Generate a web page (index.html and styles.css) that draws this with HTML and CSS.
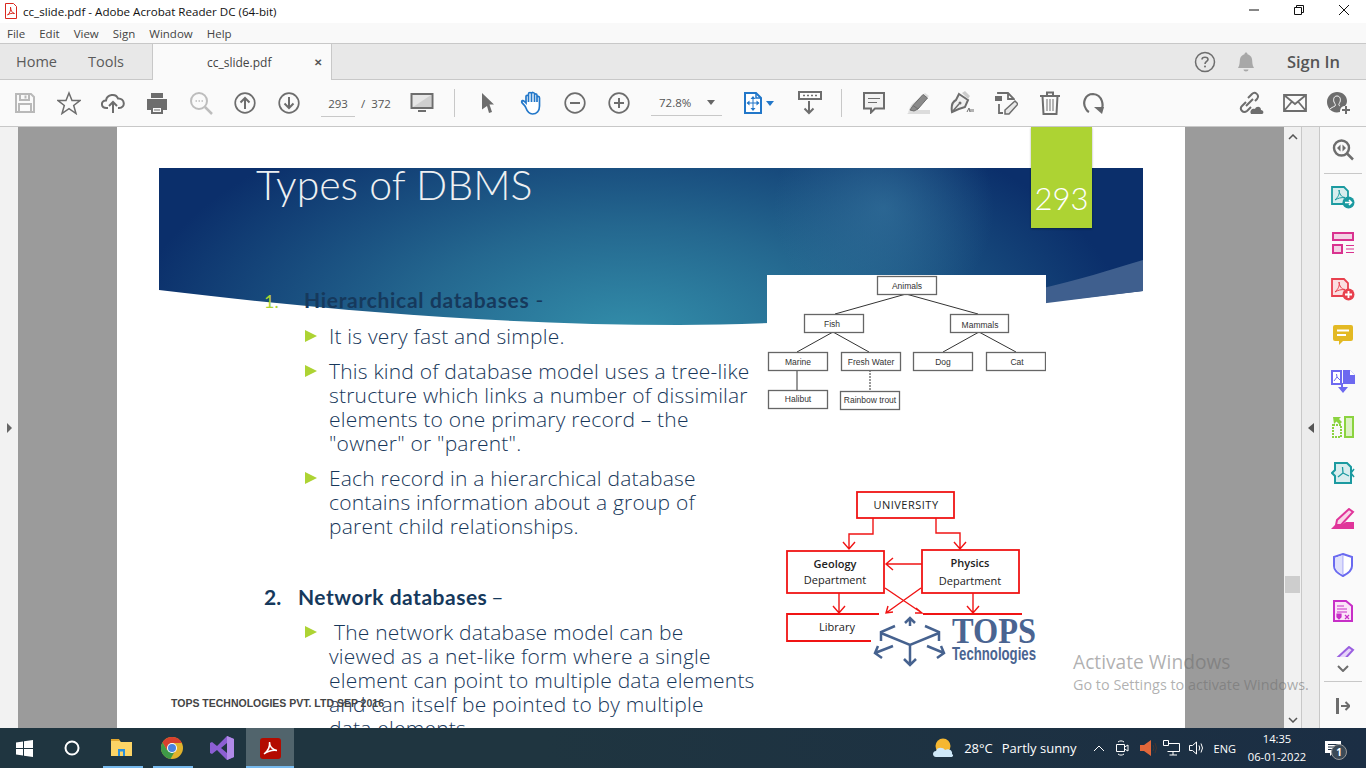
FILE: index.html
```html
<!DOCTYPE html>
<html lang="en">
<head>
    <meta charset="UTF-8">
    <title>cc_slide.pdf - Adobe Acrobat Reader DC (64-bit)</title>
    <link rel="stylesheet" href="styles.css">
</head>
<body>
    <header class="titlebar">
        <svg class="app-icon" width="14" height="16" viewBox="0 0 14 16"><path d="M1.5 .5H9.5L12.5 3.5V15.5H1.5Z" fill="#fff" stroke="#d9281e"/><path d="M3.5 12C6 10 7 7 6.5 4C6.500 7 8 10 10.500 10.500C8 10 5.500 10.500 3.500 12Z" fill="none" stroke="#d9281e"/></svg>
        <span class="window-title">cc_slide.pdf - Adobe Acrobat Reader DC (64-bit)</span>
        <div class="window-controls">
            <svg width="12" height="12" viewBox="0 0 12 12"><path d="M1 6H11" stroke="#111"/></svg>
            <svg width="12" height="12" viewBox="0 0 12 12"><path d="M1.500 3.500H8.500V10.500H1.500ZM3.500 3.500V1.500H10.500V8.500H8.500" fill="none" stroke="#111"/></svg>
            <svg width="12" height="12" viewBox="0 0 12 12"><path d="M1 1L11 11M11 1L1 11" stroke="#111"/></svg>
        </div>
    </header>

    <nav class="menubar">
        <span>File</span><span>Edit</span><span>View</span><span>Sign</span><span>Window</span><span>Help</span>
    </nav>

    <div class="tabbar">
        <a class="tab-link tab-home">Home</a>
        <a class="tab-link tab-tools">Tools</a>
        <div class="tab-active">
            <span class="tab-name">cc_slide.pdf</span>
            <span class="tab-close">&#x2715;</span>
        </div>
        <div class="tab-right">
            <svg width="22" height="22" viewBox="0 0 22 22"><circle cx="11" cy="11" r="9.500" fill="none" stroke="#6d6d6d" stroke-width="1.500"/><path d="M8 8.500C8 5.500 14 5.500 14 8.500C14 10.500 11 10.500 11 13" fill="none" stroke="#6d6d6d" stroke-width="1.600"/><circle cx="11" cy="15.500" r="1" fill="#6d6d6d"/></svg>
            <svg class="bell" width="20" height="22" viewBox="0 0 20 22"><path d="M2 17C4 14 3.500 11 4 8C4.500 5 7 3.500 8.500 3.200C8.500 .8 11.500 .8 11.500 3.200C13 3.500 15.500 5 16 8C16.500 11 16 14 18 17ZM7.500 18.500H12.500C12.500 21 7.500 21 7.500 18.500Z" fill="#a8a8a8"/></svg>
            <span class="sign-in">Sign In</span>
        </div>
    </div>

    <div class="toolbar">
        <button class="tool"><svg width="22" height="22" viewBox="0 0 22 22"><path d="M2 2H17L20 5V20H2ZM6 2.500V8H15V2.500M5 20V12H17V20M11.500 3.500V6.500" fill="none" stroke="#b9b9b9" stroke-width="2"/></svg></button>
        <button class="tool"><svg width="24" height="24" viewBox="0 0 24 24"><path d="M12 2L15 9.500H23L16.700 14.500L19 22.500L12 17.700L5 22.500L7.300 14.500L1 9.500H9Z" fill="none" stroke="#6d6d6d" stroke-width="1.500"/></svg></button>
        <button class="tool"><svg width="24" height="24" viewBox="0 0 24 24"><path d="M7 17H5.500C-.5 17 -.5 9.500 5 9.500C6 3 15 2 17 7.500C24 7 25 17 18 17H17M12 22V11M8 15L12 11L16 15" fill="none" stroke="#6d6d6d" stroke-width="2"/></svg></button>
        <button class="tool"><svg width="24" height="24" viewBox="0 0 24 24"><path d="M6 2H18V7H6ZM2 8H22V19H18V15H6V19H2Z" fill="#6d6d6d"/><path d="M7 16H17V22H7Z" fill="none" stroke="#6d6d6d" stroke-width="2"/><path d="M9 19H15" stroke="#6d6d6d"/></svg></button>
        <button class="tool"><svg width="24" height="24" viewBox="0 0 24 24"><circle cx="10" cy="10" r="8" fill="none" stroke="#bdbdbd" stroke-width="2"/><path d="M16 16L23 23" stroke="#bdbdbd" stroke-width="2.500"/><path d="M6.500 10H8M9.500 10H11M12.500 10H14" stroke="#bdbdbd" stroke-width="1.500"/></svg></button>
        <button class="tool"><svg width="22" height="22" viewBox="0 0 22 22"><circle cx="11" cy="11" r="9.800" fill="none" stroke="#6d6d6d" stroke-width="1.700"/><path d="M11 17V6M6.500 10.500L11 6L15.500 10.500" fill="none" stroke="#6d6d6d" stroke-width="2"/></svg></button>
        <button class="tool"><svg width="22" height="22" viewBox="0 0 22 22"><circle cx="11" cy="11" r="9.800" fill="none" stroke="#6d6d6d" stroke-width="1.700"/><path d="M11 5V16M6.500 11.500L11 16L15.500 11.500" fill="none" stroke="#6d6d6d" stroke-width="2"/></svg></button>
        <div class="page-box">
            <span class="page-input">293</span>
            <span class="page-slash">/</span>
            <span class="page-total">372</span>
        </div>
        <button class="tool tool-monitor"><svg width="24" height="22" viewBox="0 0 24 22"><path d="M1.500 2H22.500V16H1.500Z" fill="#e6e6e6" stroke="#6d6d6d" stroke-width="2"/><path d="M3 15L21 3V15Z" fill="#cfcfcf"/><path d="M8 19H16" stroke="#6d6d6d" stroke-width="2"/></svg></button>
        <i class="tool-sep sep-one"></i>
        <button class="tool"><svg width="14" height="22" viewBox="0 0 14 22"><path d="M1 1L13 12.500H8.500L11 20L8 21L6 14L1 17.500Z" fill="#6d6d6d"/></svg></button>
        <button class="tool"><svg width="24" height="24" viewBox="0 0 24 24"><path d="M5.500 16C4.500 14 2 12.500 1.700 11C1.500 9.500 3 9 4.500 10.500L6 12V5.500C6 3.800 8 3.800 8.500 5.500V3C8.500 1 11.500 1 11.500 3V2.800C11.500 1 14.500 1 14.500 3V4C14.500 2.500 17 2.500 17 4.500V6.500C17 5 19.500 5 19.500 7V15C19.500 20 16.500 23 12.500 23C9 23 7 20 5.500 16ZM8.500 5.500V11M11.500 3V11M14.500 3V11M17 5V11" fill="#fff" stroke="#2277c9" stroke-width="1.700"/></svg></button>
        <button class="tool tool-minus"><svg width="22" height="22" viewBox="0 0 22 22"><circle cx="11" cy="11" r="9.800" fill="none" stroke="#6d6d6d" stroke-width="1.700"/><path d="M6 11H16" stroke="#6d6d6d" stroke-width="2"/></svg></button>
        <button class="tool"><svg width="22" height="22" viewBox="0 0 22 22"><circle cx="11" cy="11" r="9.800" fill="none" stroke="#6d6d6d" stroke-width="1.700"/><path d="M6 11H16M11 6V16" stroke="#6d6d6d" stroke-width="2"/></svg></button>
        <div class="zoom-box">
            <span class="zoom-value">72.8%</span>
            <i class="caret"></i>
        </div>
        <button class="tool tool-fit"><svg width="18" height="22" viewBox="0 0 18 22"><path d="M1 1H12L17 6V21H1Z" fill="#fff" stroke="#2277c9" stroke-width="2"/><path d="M12 1V6H17" fill="none" stroke="#2277c9" stroke-width="1.500"/><path d="M9 5V18M3.500 11H14.500" stroke="#2277c9"/><path d="M9 4L11.500 7H6.500ZM9 19L11.500 16H6.500ZM2.500 11L5.500 8.500V13.500ZM15.500 11L12.500 8.500V13.500Z" fill="#2277c9"/></svg><i class="caret caret-blue"></i></button>
        <button class="tool tool-keys"><svg width="24" height="24" viewBox="0 0 24 24"><path d="M1 1H23V8H1Z" fill="none" stroke="#6d6d6d" stroke-width="2"/><path d="M5 4.500H7M9 4.500H11M13 4.500H15M17 4.500H19" stroke="#6d6d6d" stroke-width="1.500"/><path d="M11 10V22M6.500 17.500L11 22L15.500 17.500" fill="none" stroke="#6d6d6d" stroke-width="2"/></svg></button>
        <i class="tool-sep sep-two"></i>
        <button class="tool tool-comment"><svg width="22" height="22" viewBox="0 0 22 22"><path d="M1 1H21V16.500H12L8 20.500V16.500H1Z" fill="#f2f2f2" stroke="#6d6d6d" stroke-width="2"/><path d="M5 6.500H17M5 10.500H14" stroke="#6d6d6d"/></svg></button>
        <button class="tool"><svg width="24" height="24" viewBox="0 0 24 24"><path d="M1 23H24V19H6Z" fill="#dcdcdc"/><path d="M19 2L23 5L11 18L6 19L2 22L4 16L6 13Z" fill="#ddd"/><path d="M17 3.500L21.500 7L12 18L7 14.500Z M7 14.500L4 19L8 20L12 18" fill="#8a8a8a" stroke="#6d6d6d"/></svg></button>
        <button class="tool"><svg width="24" height="24" viewBox="0 0 24 24"><path d="M9 3L18 9L15 16C11 17 6 19 2 21C1 15 2 11 6 9Z" fill="#f0f0f0" stroke="#6d6d6d" stroke-width="2"/><path d="M2 21L9 13" stroke="#6d6d6d" stroke-width="1.500"/><circle cx="10" cy="12" r="1.500" fill="#6d6d6d"/><path d="M12 2L15 0L20 5L18 8Z" fill="#ccc"/><path d="M17 21L19 17L20 21M21 21V18M23 21V18" stroke="#6d6d6d" fill="none"/></svg></button>
        <button class="tool"><svg width="24" height="24" viewBox="0 0 24 24"><path d="M1 5H8V10H1Z" fill="#6d6d6d"/><path d="M4 3V2H14L20 8V9M14 2V8H20M5 13V22H9" fill="none" stroke="#6d6d6d" stroke-width="1.800"/><path d="M21 10L24 13L15 23H11V19Z" fill="#e8e8e8" stroke="#6d6d6d" stroke-width="1.500"/></svg></button>
        <button class="tool"><svg width="20" height="24" viewBox="0 0 20 24"><path d="M0 5H20M7 5V1.500H13V5M2.500 5L3.500 23H16.500L17.500 5" fill="none" stroke="#6d6d6d" stroke-width="2"/><path d="M7 8V20M10 8V20M13 8V20" stroke="#6d6d6d"/></svg></button>
        <button class="tool"><svg width="24" height="24" viewBox="0 0 24 24"><path d="M19 20C22 15 21 4 11 3C3 3 0 12 4 18C5 20 6 20.500 7 21" fill="none" stroke="#6d6d6d" stroke-width="2.200"/><path d="M12 16H22L20 23Z" fill="#6d6d6d"/></svg></button>
        <div class="tool-right">
            <button class="tool"><svg width="26" height="24" viewBox="0 0 26 24"><path d="M10 7L14 3C17 0 22 4 19 8L17 10M13 16L9 20C5 23 1 18 4 15L8 11M8 15L15 8" fill="none" stroke="#6d6d6d" stroke-width="2"/><path d="M13 23C11 19 15 17 17 18C18 15 23 15 23 19C26 19 26 23 24 23Z" fill="#6d6d6d"/></svg></button>
            <button class="tool"><svg width="24" height="20" viewBox="0 0 24 20"><path d="M1 2H23V18H1ZM1 2L12 11L23 2M1 18L9 8.500M23 18L15 8.500" fill="none" stroke="#6d6d6d" stroke-width="1.800"/></svg></button>
            <button class="tool"><svg width="24" height="24" viewBox="0 0 24 24"><path d="M10 1C16 1 20 5 20 10C20 12 19 14 18 15C15 15 13 17 13 21C5 23 0 17 0 11C0 5 5 1 10 1Z" fill="#6d6d6d"/><path d="M10 5C7 5 6 8 7 11C8 13 9 14 8 15C6 16 4 17 3 18M10 5C13 5 14 8 13 11C12 13 11 14 13 15" fill="none" stroke="#fafafa"/><path d="M19 15V23M15 19H23" stroke="#6d6d6d" stroke-width="2"/></svg></button>
        </div>
    </div>

    <div class="workspace">
        <aside class="nav-panel"><i class="arrow-right"></i></aside>

        <main class="viewer">
            <article class="page">
                <svg class="banner" width="984" height="160" viewBox="0 0 984 160">
                    <defs>
                        <radialGradient id="glow" gradientUnits="userSpaceOnUse" cx="470" cy="170" r="500" gradientTransform="translate(0 85) scale(1 .5)">
                            <stop offset="0" stop-color="#338fab"/>
                            <stop offset=".45" stop-color="#24678f"/>
                            <stop offset="1" stop-color="#0b2f6b"/>
                        </radialGradient>
                        <radialGradient id="spot" gradientUnits="userSpaceOnUse" cx="725" cy="40" r="110">
                            <stop offset="0" stop-color="#3b7ca4" stop-opacity=".55"/>
                            <stop offset="1" stop-color="#3b7ca4" stop-opacity="0"/>
                        </radialGradient>
                    </defs>
                    <path d="M0 0H984V123C800 145 640 157 520 157C330 157 150 140 0 122Z" fill="url(#glow)"/>
                    <path d="M0 0H984V123C800 145 640 157 520 157C330 157 150 140 0 122Z" fill="url(#spot)"/>
                    <path d="M880 121C920 112 950 102 984 92V123L880 136Z" fill="#3f5f8e"/>
                </svg>

                <h1 class="slide-title">Types of DBMS</h1>
                <div class="slide-tag">293</div>

                <div class="slide-body">
                    <h2 class="db-head db-first"><span class="db-num">1.</span><b>Hierarchical databases</b><span class="dash">-</span></h2>
                    <ul class="bullets bullets-first">
                        <li>It is very fast and simple.</li>
                        <li>This kind of database model uses a tree-like<br>structure which links a number of dissimilar<br>elements to one primary record &ndash; the<br>"owner" or "parent".</li>
                        <li>Each record in a hierarchical database<br>contains information about a group of<br>parent child relationships.</li>
                    </ul>
                    <h2 class="db-head db-second"><span class="db-num">2.</span><b>Network databases</b><span class="dash">&ndash;</span></h2>
                    <ul class="bullets bullets-second">
                        <li><span class="lead">The network database model can be</span><br>viewed as a net-like form where a single<br>element can point to multiple data elements<br>and can itself be pointed to by multiple<br>data elements.</li>
                    </ul>
                </div>

                <svg class="tree" width="279" height="140" viewBox="0 0 279 140">
                    <rect width="279" height="140" fill="#fff"/>
                    <g class="tree-lines">
                        <path d="M139 19L68 39M139 19L211 39M66 57L30 77M66 57L102 77M212 57L176 77M212 57L249 77M30 95V115"/>
                        <path d="M103 95V115" stroke-dasharray="2 1"/>
                    </g>
                    <g class="tree-boxes">
                        <rect x="110.500" y="1.500" width="59" height="18"/>
                        <rect x="37.500" y="39.500" width="59" height="18"/>
                        <rect x="183.500" y="39.500" width="58" height="18"/>
                        <rect x="1.500" y="77.500" width="59" height="18"/>
                        <rect x="74.500" y="77.500" width="59" height="18"/>
                        <rect x="146.500" y="77.500" width="59" height="18"/>
                        <rect x="219.500" y="77.500" width="59" height="18"/>
                        <rect x="1.500" y="115.500" width="59" height="18"/>
                        <rect x="73.500" y="116.500" width="59" height="18"/>
                    </g>
                    <g class="tree-text">
                        <text x="140" y="14">Animals</text>
                        <text x="65" y="52">Fish</text>
                        <text x="213" y="53">Mammals</text>
                        <text x="31" y="90">Marine</text>
                        <text x="104" y="90">Fresh Water</text>
                        <text x="176" y="90">Dog</text>
                        <text x="250" y="90">Cat</text>
                        <text x="31" y="127">Halibut</text>
                        <text x="103" y="128">Rainbow trout</text>
                    </g>
                </svg>

                <svg class="network" width="271" height="192" viewBox="0 0 271 192">
                    <g class="net-box">
                        <rect x="88" y="13" width="97" height="26"/>
                        <rect x="18" y="72" width="97" height="42"/>
                        <rect x="153" y="71" width="97" height="43"/>
                        <path d="M110 135H18V162H110M154 135H253"/>
                    </g>
                    <g class="net-line">
                        <path d="M104 39V55H80V69M74 63L80 70L86 63"/>
                        <path d="M167 39V54H191V69M185 63L191 70L197 63"/>
                        <path d="M153 85H118M124 79L117 85L124 91" stroke-width="2"/>
                        <path d="M70 114V133M64 127L70 134L76 127" stroke-width="2"/>
                        <path d="M204 114V133M198 127L204 134L210 127"/>
                        <path d="M116 109L153 134M147 129L153 134L146 134"/>
                        <path d="M152 109L117 134M119 127L117 134L124 133"/>
                    </g>
                    <text class="net-text net-strong" x="66" y="89">Geology</text>
                    <text class="net-text" x="66" y="105">Department</text>
                    <text class="net-text net-strong" x="201" y="88">Physics</text>
                    <text class="net-text" x="201" y="106">Department</text>
                    <text class="net-text net-wide" x="137" y="30">UNIVERSITY</text>
                    <text class="net-text" x="68" y="152">Library</text>
                    <rect x="102" y="136" width="169" height="56" fill="#fff"/>
                    <g class="logo-mark">
                        <path d="M141 147V140M136 144L141 139L146 144"/>
                        <path d="M124 167L106 174M109 167L106 174L113 179"/>
                        <path d="M158 167L175 174M172 167L175 174L168 179"/>
                        <path d="M126 147L112 153V162M156 147L170 153V162" stroke-width="3.500"/>
                        <path d="M112 154L141 166L170 154M141 166V186M135 180L141 186L147 180" stroke-width="3.500"/>
                    </g>
                    <text class="logo-name" x="183" y="164" textLength="84" lengthAdjust="spacingAndGlyphs">TOPS</text>
                    <text class="logo-sub" x="183" y="181" textLength="84" lengthAdjust="spacingAndGlyphs">Technologies</text>
                </svg>

                <p class="slide-foot">TOPS TECHNOLOGIES PVT. LTD SEP 2016</p>
            </article>
        </main>

        <div class="scrollbar">
            <svg width="10" height="6" viewBox="0 0 10 6"><path d="M1 5L5 1L9 5" fill="none" stroke="#555" stroke-width="1.500"/></svg>
            <i class="scroll-thumb"></i>
            <svg width="10" height="6" viewBox="0 0 10 6"><path d="M1 1L5 5L9 1" fill="none" stroke="#555" stroke-width="1.500"/></svg>
        </div>

        <div class="side-handle"><i class="arrow-left"></i></div>

        <aside class="tool-rail">
            <div class="rail-search">
                <svg width="22" height="22" viewBox="0 0 22 22"><circle cx="9.500" cy="9" r="7.500" fill="none" stroke="#6d6d6d" stroke-width="2.400"/><path d="M15 14.500L21 20.500" stroke="#6d6d6d" stroke-width="2.500"/><path d="M8.500 5.500L5 9L8.500 12.500ZM10.500 5.500L14 9L10.500 12.500Z" fill="#6d6d6d"/></svg>
            </div>
            <div class="rail-list">
                <div class="rail-item"><svg width="24" height="24" viewBox="0 0 24 24"><path d="M1 2H13L17 6V19H1Z" fill="#d8edee" stroke="#1b9aa0" stroke-width="1.800"/><path d="M4 15C7 12 9 9 8 5C8.500 9 10 12 14 12.500C10 12.500 7 13 4 15Z" fill="none" stroke="#1b9aa0"/><circle cx="17.500" cy="17.500" r="6" fill="#1b9aa0"/><path d="M14 17.500H20M18 15L20.500 17.500L18 20" fill="none" stroke="#fff" stroke-width="1.500"/></svg></div>
                <div class="rail-item"><svg width="24" height="24" viewBox="0 0 24 24"><path d="M2 2H22V9H2Z" fill="#f3d3e5" stroke="#d9328f" stroke-width="2"/><path d="M2 14H11V22H2Z" fill="#f3d3e5" stroke="#d9328f" stroke-width="2"/><path d="M15 14.500H23M15 18H23M15 21.500H23" stroke="#d9328f"/></svg></div>
                <div class="rail-item"><svg width="24" height="24" viewBox="0 0 24 24"><path d="M1 2H13L17 6V19H1Z" fill="#fbdfe1" stroke="#e8404e" stroke-width="1.800"/><path d="M4 15C7 12 9 9 8 5C8.500 9 10 12 14 12.500C10 12.500 7 13 4 15Z" fill="none" stroke="#e8404e"/><circle cx="17.500" cy="17.500" r="6" fill="#e8404e"/><path d="M14 17.500H21M17.500 14V21" stroke="#fff" stroke-width="1.800"/></svg></div>
                <div class="rail-item"><svg width="20" height="22" viewBox="0 0 20 22"><path d="M2 1H18Q20 1 20 3V15Q20 17 18 17H10L6 21V17H2Q0 17 0 15V3Q0 1 2 1Z" fill="#e3b924"/><path d="M4 6.500H16M4 11H13" stroke="#fff" stroke-width="2"/></svg></div>
                <div class="rail-item"><svg width="24" height="24" viewBox="0 0 24 24"><path d="M1 2H10V15H1Z" fill="#fff" stroke="#6d69f0" stroke-width="2"/><path d="M12 1H19L24 6V15H12Z" fill="#6d69f0"/><path d="M19 1V6H24" fill="#fff"/><path d="M3 12L6 8L5.500 5M6 8L9 11" stroke="#6d69f0" fill="none"/><path d="M12 14V18H17L12 24L7 18H10V14Z" fill="#6d69f0"/></svg></div>
                <div class="rail-item"><svg width="22" height="22" viewBox="0 0 22 22"><path d="M13 1H21V21H13Z" fill="#dcf2c4" stroke="#8bd33f" stroke-width="2"/><path d="M1 9H9V21H1Z" fill="none" stroke="#8bd33f" stroke-width="2" stroke-dasharray="2 1"/><path d="M1 1H9L7 3L10 6L7.500 8.500L4.500 5.500L2 8Z" fill="#8bd33f"/></svg></div>
                <div class="rail-item"><svg width="24" height="22" viewBox="0 0 24 22"><path d="M4 1H16L20 5V21H4V14L1 11L4 8Z" fill="#d8edee" stroke="#1b9aa0" stroke-width="2"/><path d="M7 15L12 11L11.500 5M12 11L18 14" stroke="#1b9aa0" stroke-width="1.300" fill="none"/><path d="M23 7L20 11L23 15" stroke="#1b9aa0" stroke-width="1.500" fill="none"/></svg></div>
                <div class="rail-item"><svg width="24" height="22" viewBox="0 0 24 22"><path d="M18 1L22 4L10 17H5L6 12Z" fill="#f9d5e8" stroke="#e0359a" stroke-width="2"/><path d="M0 21L4 17H10L15 14H23V21Z" fill="#e0359a"/></svg></div>
                <div class="rail-item"><svg width="20" height="24" viewBox="0 0 20 24"><path d="M10 1L19 4V13C19 18 14 21 10 23C6 21 1 18 1 13V4Z" fill="#fff" stroke="#6a6af0" stroke-width="2"/><path d="M10 2L2 5V13C2 17 6 20 10 22Z" fill="#dfe0fb"/><path d="M10 2V22" stroke="#6a6af0" stroke-width=".5"/></svg></div>
                <div class="rail-item"><svg width="20" height="22" viewBox="0 0 20 22"><path d="M1 1H13L19 6V21H1Z" fill="#fbe3f8" stroke="#c72fc7" stroke-width="2"/><path d="M4 6H11M4 9H14M4 12H14" stroke="#c72fc7"/><path d="M4 14H8V17L6 19L4 17ZM12 15L16 19M16 15L12 19" stroke="#c72fc7" fill="#c72fc7" stroke-width="1.200"/></svg></div>
                <div class="rail-item"><svg width="24" height="22" viewBox="0 0 24 22"><path d="M18 1L22 4L10 17H5L6 12Z" fill="#e6d4f9" stroke="#9a5fe0" stroke-width="2"/><path d="M0 21L4 17H10L15 14H23V21Z" fill="#9a5fe0"/></svg></div>
            </div>
            <div class="rail-foot">
                <svg class="rail-more" width="12" height="7" viewBox="0 0 12 7"><path d="M1 1L6 6L11 1" fill="none" stroke="#6d6d6d" stroke-width="2"/></svg>
                <i class="rail-line"></i>
                <svg class="rail-collapse" width="14" height="16" viewBox="0 0 14 16"><path d="M1.500 0V16" stroke="#6d6d6d" stroke-width="3"/><path d="M5 8H13M9.500 4L13.500 8L9.500 12" fill="none" stroke="#6d6d6d" stroke-width="2"/></svg>
            </div>
        </aside>

        <div class="activate">
            <p class="activate-title">Activate Windows</p>
            <p class="activate-sub">Go to Settings to activate Windows.</p>
        </div>
    </div>

    <footer class="taskbar">
        <div class="task task-start"><svg width="17" height="17" viewBox="0 0 17 17"><path d="M0 2.500L7 1.500V8H0ZM8 1.300L17 0V8H8ZM0 9H7V15.500L0 14.500ZM8 9H17V17L8 15.700Z" fill="#fff"/></svg></div>
        <div class="task task-search"><svg width="16" height="16" viewBox="0 0 16 16"><circle cx="8" cy="8" r="6.500" fill="none" stroke="#fff" stroke-width="2"/></svg></div>
        <div class="task task-open"><svg width="22" height="18" viewBox="0 0 22 18"><path d="M0 1H8L10 3H21V17H0Z" fill="#fcd466"/><path d="M0 0H8L9 2H0Z" fill="#e2a72e"/><path d="M7 10H14V17H12V12.500H9V17H7Z" fill="#2a8fdc"/></svg></div>
        <div class="task task-open"><svg width="22" height="22" viewBox="0 0 22 22"><circle cx="11" cy="11" r="11" fill="#e0b22c"/><path d="M11 0A11 11 0 0 0 1.500 5.500L6 13L11 6H21A11 11 0 0 0 11 0Z" fill="#d8402e"/><path d="M1.500 5.500A11 11 0 0 0 9.500 22L14 14L6 13Z" fill="#3f9a48"/><circle cx="11" cy="11" r="5" fill="#fff"/><circle cx="11" cy="11" r="4" fill="#4a83e0"/></svg></div>
        <div class="task task-vs"><svg width="24" height="24" viewBox="0 0 24 24"><path d="M17 0L24 3V21L17 24L7 14L2 18L0 17V7L2 6L7 10ZM17 7L11 12L17 17Z" fill="#8c5fd3"/><path d="M17 0L24 3V21L17 24Z" fill="#b18ae8"/></svg></div>
        <div class="task task-active"><svg width="21" height="21" viewBox="0 0 21 21"><rect width="21" height="21" rx="3" fill="#b30b00"/><path d="M4 16C8 13 10 8 9.500 4C9.500 8 12 12 17 12.500C13 12 8 13 4 16Z" fill="none" stroke="#fff" stroke-width="1.500"/></svg></div>

        <div class="tray">
            <svg class="tray-weather" width="22" height="20" viewBox="0 0 22 20"><circle cx="11" cy="8" r="7.500" fill="#f5b731"/><path d="M4 19C0 19 0 13 4 13C5 9 11 9 13 12C17 10 21 13 20 16C22 17 21 19 19 19Z" fill="#cfe8f8"/></svg>
            <span class="tray-temp">28&deg;C</span>
            <span class="tray-sky">Partly sunny</span>
            <svg class="tray-up" width="12" height="7" viewBox="0 0 12 7"><path d="M1 6L6 1L11 6" fill="none" stroke="#fff"/></svg>
            <svg class="tray-meet" width="14" height="16" viewBox="0 0 14 16"><path d="M1.500 4.500H9.500V11.500H1.500ZM9.500 7L13 5V11L9.500 9M3 2C5 .5 7 .5 9 2M3 14C5 15.500 7 15.500 9 14" fill="none" stroke="#fff"/></svg>
            <svg class="tray-red" width="18" height="16" viewBox="0 0 18 16"><path d="M0 5H4L11 0V16L4 11H0Z" fill="#e2673a"/><path d="M13 5Q15 8 13 11M15 3Q18 8 15 13" stroke="#45352f" fill="none"/></svg>
            <svg class="tray-net" width="18" height="16" viewBox="0 0 18 16"><path d="M4.500 3.500H16.500V11.500H4.500M10 11.500V15M6.500 15H14" fill="none" stroke="#fff"/><path d="M.5 .5H5.500V5.500H.5Z" fill="#1d3044" stroke="#fff"/></svg>
            <svg class="tray-vol" width="16" height="14" viewBox="0 0 16 14"><path d="M.5 4.500H3.500L7.500 1V13L3.500 9.500H.5ZM10 4.500Q11.500 7 10 9.500M12 2.500Q15 7 12 11.500" fill="none" stroke="#fff"/></svg>
            <span class="tray-lang">ENG</span>
            <div class="tray-clock"><span>14:35</span><span>06-01-2022</span></div>
            <div class="tray-notes">
                <svg width="16" height="15" viewBox="0 0 16 15"><path d="M0 0H16V12H8L5 15V12H0Z" fill="#fff"/><path d="M3 3.500H13M3 6H13M3 8.500H10" stroke="#1d3044"/></svg>
                <b class="notes-count">1</b>
            </div>
        </div>
    </footer>
</body>
</html>
```

FILE: styles.css
```css
* {
    box-sizing: border-box;
}

html, body {
    margin: 0;
    padding: 0;
    width: 1366px;
    height: 768px;
    overflow: hidden;
}

body {
    display: flex;
    flex-direction: column;
    font-family: "Open Sans", "Noto Sans", sans-serif;
    color: #444;
    background: #fff;
}

i {
    display: block;
}

p, h1, h2, ul {
    margin: 0;
    padding: 0;
}

/* window chrome */
.titlebar {
    height: 23px;
    flex: none;
    display: flex;
    align-items: center;
    padding-left: 4px;
    background: #fff;
}

.app-icon {
    margin-top: -1px;
}

.window-title {
    margin-left: 5px;
    font-size: 11.6px;
    color: #111;
}

.window-controls {
    margin-left: auto;
    display: flex;
    gap: 33px;
    padding-right: 16px;
    margin-top: -3px;
}

.menubar {
    height: 20px;
    flex: none;
    display: flex;
    align-items: center;
    gap: 14px;
    padding-left: 7px;
    background: #f9f9f9;
    font-size: 11.5px;
    color: #444;
}

.tabbar {
    height: 37px;
    flex: none;
    display: flex;
    background: #e8e8e8;
    border-top: 1px solid #c8c8c8;
    border-bottom: 1px solid #c8c8c8;
}

.tab-link {
    font-size: 14.5px;
    line-height: 35px;
    color: #5a5a5a;
}

.tab-home {
    margin-left: 16px;
}

.tab-tools {
    margin-left: 31px;
}

.tab-active {
    width: 180px;
    height: 36px;
    margin-left: 28px;
    position: relative;
    display: flex;
    align-items: center;
    background: #fafafa;
    border-left: 1px solid #c8c8c8;
    border-right: 1px solid #c8c8c8;
}

.tab-name {
    margin-left: 54px;
    font-size: 12px;
    color: #444;
}

.tab-close {
    margin-left: 43px;
    font-size: 10px;
    font-weight: 700;
    color: #555;
}

.tab-right {
    margin-left: auto;
    display: flex;
    align-items: center;
    padding-right: 26px;
}

.bell {
    margin-left: 20px;
}

.sign-in {
    margin-left: 31px;
    font-size: 16.5px;
    font-weight: 600;
    color: #555;
}

.toolbar {
    height: 47px;
    flex: none;
    display: flex;
    align-items: center;
    padding-left: 3px;
    background: #fafafa;
    border-bottom: 1px solid #c8c8c8;
}

.tool {
    width: 44px;
    height: 36px;
    flex: none;
    padding: 0;
    display: flex;
    align-items: center;
    justify-content: center;
    background: none;
    border: none;
}

.tool-minus {
    margin-left: -1px;
}

.page-box {
    width: 89px;
    flex: none;
    display: flex;
    align-items: center;
    font-size: 11.5px;
    color: #555;
    margin-left: 10px;
}

.page-input {
    width: 34px;
    line-height: 24px;
    margin-top: 2px;
    text-align: center;
    border-bottom: 1px solid #c8c8c8;
}

.page-slash {
    margin-left: 6px;
}

.page-total {
    margin-left: 6px;
}

.tool-monitor {
    margin-left: -10px;
}

.tool-sep {
    width: 1px;
    height: 28px;
    background: #c8c8c8;
    flex: none;
}

.sep-one {
    margin-left: 10px;
    margin-right: 11px;
}

.zoom-box {
    width: 71px;
    height: 26px;
    margin-left: 10px;
    flex: none;
    display: flex;
    align-items: center;
    padding-left: 8px;
    font-size: 11.500px;
    color: #555;
    border-bottom: 1px solid #c8c8c8;
}

.caret {
    width: 0;
    height: 0;
    border-left: 4px solid transparent;
    border-right: 4px solid transparent;
    border-top: 5px solid #666;
}

.zoom-box .caret {
    margin-left: auto;
    margin-right: 7px;
}

.caret-blue {
    border-top-color: #2277c9;
    margin-left: 4px;
}

.tool-fit {
    margin-left: 15px;
}

.tool-keys {
    margin-left: 7px;
}

.sep-two {
    margin-left: 9px;
}

.tool-comment {
    margin-left: 10px;
}

.tool-right {
    margin-left: auto;
    display: flex;
    align-items: center;
    padding-right: 5px;
}

/* document area */
.workspace {
    height: 601px;
    flex: none;
    display: flex;
    position: relative;
}

.nav-panel {
    width: 18px;
    flex: none;
    display: flex;
    align-items: center;
    justify-content: center;
    background: #f2f2f2;
}

.arrow-right {
    width: 0;
    height: 0;
    border-top: 5px solid transparent;
    border-bottom: 5px solid transparent;
    border-left: 5px solid #666;
}

.viewer {
    width: 1266px;
    flex: none;
    padding-left: 99px;
    overflow: hidden;
    background: #9b9b9b;
}

.page {
    width: 1068px;
    height: 601px;
    position: relative;
    overflow: hidden;
    background: #fff;
}

.banner {
    position: absolute;
    left: 42px;
    top: 41px;
}

.slide-title {
    position: absolute;
    left: 139px;
    top: 33px;
    font-family: Lato, sans-serif;
    font-size: 41px;
    font-weight: 300;
    line-height: 50px;
    color: #eef0f2;
    white-space: nowrap;
}

.slide-tag {
    position: absolute;
    left: 914px;
    top: 0;
    width: 61px;
    height: 101px;
    padding-top: 51px;
    text-align: center;
    font-family: Lato, sans-serif;
    font-size: 31px;
    font-weight: 300;
    line-height: 40px;
    color: #fff;
    background: #add333;
    box-shadow: 0 1px 2px rgba(0, 0, 0, .35);
}

.slide-body {
    position: relative;
    padding-left: 147px;
    padding-top: 160px;
    font-family: "Open Sans", sans-serif;
    color: #17375a;
}

.db-head {
    display: flex;
    align-items: baseline;
    font-size: 21px;
    font-weight: 400;
    line-height: 26px;
    font-family: Lato, sans-serif;
    color: #16395c;
    white-space: pre;
}

.db-first .db-num {
    width: 40px;
    font-size: 18px;
    color: #add333;
}

.db-second .db-num {
    width: 34px;
    font-weight: 700;
}

.db-head b {
    font-weight: 700;
    letter-spacing: .7px;
}

.db-second b {
    letter-spacing: .5px;
}

.dash {
    margin-left: 6px;
    font-weight: 400;
}

.db-second .dash {
    margin-left: 4px;
}

.bullets {
    list-style: none;
    padding-left: 65px;
    font-family: "Open Sans", sans-serif;
    font-weight: 300;
    font-size: 21px;
    line-height: 24px;
    letter-spacing: .2px;
    white-space: nowrap;
}

.bullets li {
    position: relative;
    margin-bottom: 11px;
}

.bullets li::before {
    content: "";
    position: absolute;
    left: -24px;
    top: 6px;
    border-top: 6px solid transparent;
    border-bottom: 6px solid transparent;
    border-left: 12px solid #add333;
}

.bullets-first {
    margin-top: 10px;
}

.db-second {
    margin-top: 46px;
}

.bullets-second {
    margin-top: 10px;
}

.lead {
    margin-left: 5px;
}

.tree {
    position: absolute;
    left: 650px;
    top: 148px;
}

.tree-lines path {
    fill: none;
    stroke: #333;
    stroke-width: 1;
}

.tree-boxes rect {
    fill: #fff;
    stroke: #666;
    stroke-width: 1.300;
}

.tree-text text {
    font-family: "Liberation Sans", sans-serif;
    font-size: 8.500px;
    fill: #333;
    text-anchor: middle;
}

.network {
    position: absolute;
    left: 652px;
    top: 352px;
    overflow: visible;
}

.net-box rect, .net-box path {
    fill: none;
    stroke: #f01414;
    stroke-width: 1.800;
}

.net-line path {
    fill: none;
    stroke: #f01414;
    stroke-width: 1.400;
}

.net-text {
    font-family: "Open Sans", sans-serif;
    font-size: 11px;
    fill: #222;
    text-anchor: middle;
}

.net-strong {
    font-weight: 600;
}

.net-wide {
    letter-spacing: .5px;
}

.logo-mark path {
    fill: none;
    stroke: #46628f;
    stroke-width: 2.500;
}

.logo-name {
    font-family: "Liberation Serif", serif;
    font-size: 36px;
    font-weight: 700;
    fill: #4a6491;
}

.logo-sub {
    font-family: "Liberation Sans", sans-serif;
    font-size: 18px;
    font-weight: 700;
    fill: #4a6491;
}

.slide-foot {
    position: absolute;
    left: 54px;
    top: 570px;
    font-family: "Liberation Sans", sans-serif;
    font-size: 10.500px;
    font-weight: 700;
    color: #444;
    white-space: nowrap;
}

.scrollbar {
    width: 17px;
    flex: none;
    position: relative;
    display: flex;
    flex-direction: column;
    align-items: center;
    justify-content: space-between;
    padding: 7px 0 5px;
    background: #f1f1f1;
}

.scroll-thumb {
    position: absolute;
    left: 1px;
    top: 449px;
    width: 15px;
    height: 17px;
    background: #cdcdcd;
}

.side-handle {
    width: 19px;
    flex: none;
    display: flex;
    align-items: center;
    justify-content: center;
    background: #ececec;
    border-left: 1px solid #c8c8c8;
    border-right: 1px solid #c8c8c8;
}

.arrow-left {
    width: 0;
    height: 0;
    border-top: 5px solid transparent;
    border-bottom: 5px solid transparent;
    border-right: 6px solid #555;
}

.tool-rail {
    width: 46px;
    flex: none;
    display: flex;
    flex-direction: column;
    background: #fafafa;
}

.rail-search {
    height: 47px;
    flex: none;
    margin: 0 4px;
    display: flex;
    align-items: center;
    justify-content: center;
    border-bottom: 1px solid #c8c8c8;
}

.rail-list {
    height: 483px;
    flex: none;
    overflow: hidden;
}

.rail-item {
    height: 46px;
    display: flex;
    align-items: center;
    justify-content: center;
}

.rail-foot {
    flex: 1;
    margin: 0 4px;
    display: flex;
    flex-direction: column;
    align-items: center;
}

.rail-more {
    margin-top: 8px;
}

.rail-line {
    width: 100%;
    height: 1px;
    margin-top: 9px;
    background: #c8c8c8;
}

.rail-collapse {
    margin-top: 16px;
}

.activate {
    position: absolute;
    left: 1073px;
    top: 523px;
    color: rgba(110, 110, 110, .55);
    font-family: "Open Sans", sans-serif;
    white-space: nowrap;
    pointer-events: none;
}

.activate-title {
    font-size: 19.200px;
    line-height: 24px;
}

.activate-sub {
    font-size: 14.400px;
    line-height: 22px;
}

/* taskbar */
.taskbar {
    height: 40px;
    flex: none;
    display: flex;
    align-items: center;
    background: linear-gradient(90deg, #1f3540, #1f3540 40%, #1b2e44);
    color: #fff;
    font-family: "Open Sans", sans-serif;
}

.task {
    width: 48px;
    height: 40px;
    flex: none;
    margin-right: 2px;
    position: relative;
    display: flex;
    align-items: center;
    justify-content: center;
}

.task-start, .task-vs, .task-active {
    margin-right: 0;
}

.task-open::after {
    content: "";
    position: absolute;
    left: 5px;
    right: 3px;
    bottom: 0;
    height: 2px;
    background: #76b9ed;
}

.task-active {
    background: #51646c;
    box-shadow: inset 0 -2px 0 #76b9ed;
}

.tray {
    margin-left: auto;
    display: flex;
    align-items: center;
    font-size: 13px;
    height: 40px;
    padding-right: 17px;
}

.tray-temp {
    margin-left: 10px;
}

.tray-sky {
    margin-left: 9px;
}

.tray-up {
    margin-left: 16px;
}

.tray-meet {
    margin-left: 10px;
}

.tray-red {
    margin-left: 11px;
}

.tray-net {
    margin-left: 5px;
}

.tray-vol {
    margin-left: 8px;
}

.tray-lang {
    margin-left: 9px;
    font-size: 11px;
}

.tray-clock {
    width: 70px;
    margin-left: 6px;
    display: flex;
    flex-direction: column;
    align-items: center;
    font-size: 11.200px;
    line-height: 18px;
}

.tray-notes {
    width: 33px;
    margin-left: 4px;
    position: relative;
    display: flex;
    justify-content: center;
}

.notes-count {
    position: absolute;
    left: 15px;
    top: 3px;
    width: 16px;
    height: 16px;
    border: 1px solid #999;
    border-radius: 50%;
    background: #3b4a57;
    font-size: 10px;
    line-height: 14px;
    text-align: center;
}
```
